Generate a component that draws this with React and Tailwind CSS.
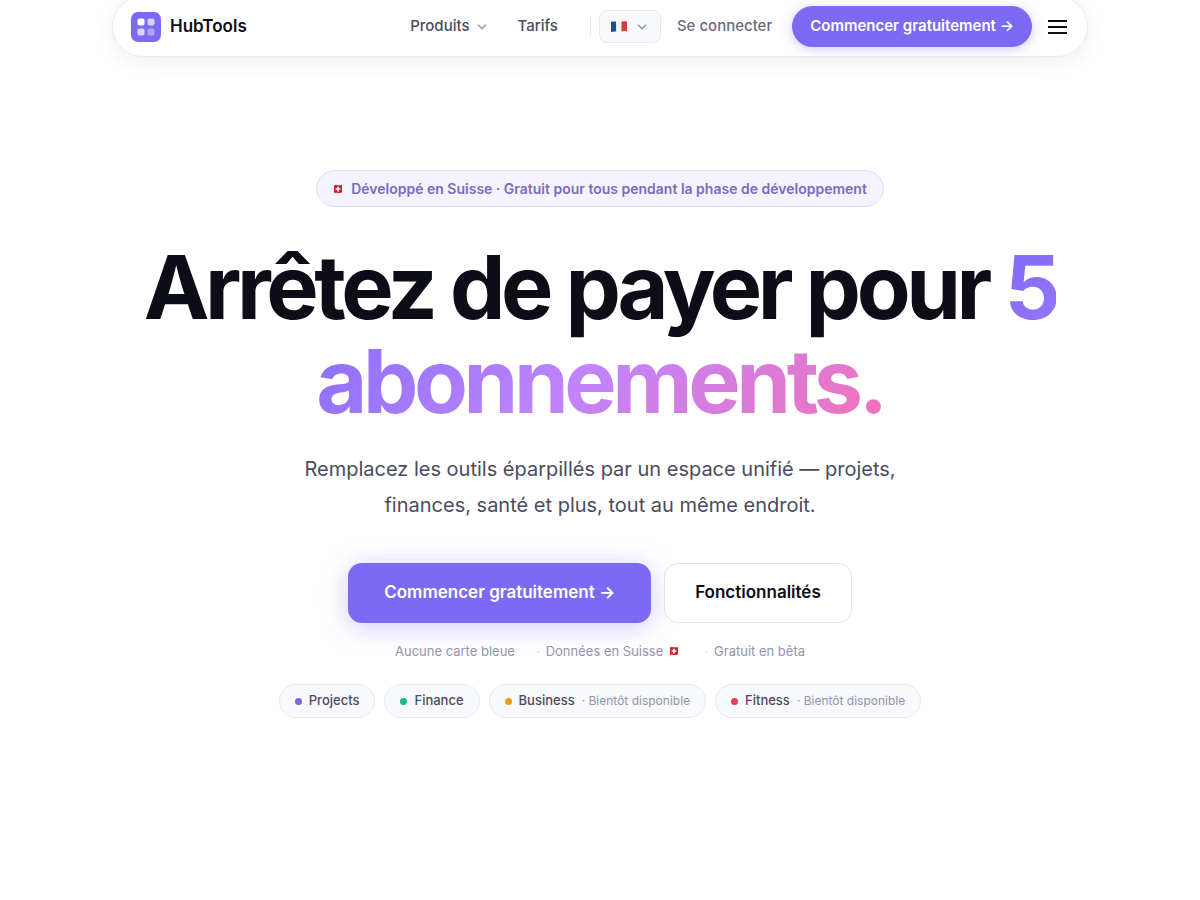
import { ChevronDown } from "lucide-react";

function SwissFlag() {
  return (
    <svg role="img" aria-label="Suisse" width="10" height="10" viewBox="0 0 10 10" className="shrink-0">
      <path d="M1 1.4C3.5 .2 6 2 9 1v7.6C6.500 9.600 4 8 1 9z" fill="#c8232c" />
      <path d="M4.200 2.700h1.600v1.600h1.600v1.500H5.800v1.600H4.200V5.800H2.600V4.300h1.600z" fill="#fff" />
    </svg>
  );
}

function FrenchFlag() {
  return (
    <svg role="img" aria-label="Français" width="16" height="12" viewBox="0 0 16 12">
      <path d="M0 1c2-.7 4-.5 5.300 0v9.700C4 10.300 2 10.300 0 11z" fill="#1b4f94" />
      <path d="M5.300 1c2 .6 3.500.4 5.200-.3v9.900c-1.700.7-3.300.7-5.200.1z" fill="#f4f4f6" />
      <path d="M10.500.7c1.800-.6 3.500-.7 5.500 0v9.900c-2-.7-3.700-.6-5.500 0z" fill="#d33c35" />
    </svg>
  );
}

function Logo() {
  return (
    <svg width="30" height="30" viewBox="0 0 30 30" aria-hidden="true">
      <rect width="30" height="30" rx="7" fill="#7c6af2" />
      <rect x="6.500" y="6.500" width="7" height="7" rx="1.800" fill="#fff" />
      <rect x="16.500" y="6.500" width="7" height="7" rx="1.800" fill="#fff" opacity=".7" />
      <rect x="6.500" y="16.500" width="7" height="7" rx="1.800" fill="#fff" opacity=".7" />
      <rect x="16.500" y="16.500" width="7" height="7" rx="1.800" fill="#fff" opacity=".4" />
    </svg>
  );
}

const products = [
  { name: "Projects", dot: "bg-[#7c66d9]" },
  { name: "Finance", dot: "bg-[#1fb88a]" },
  { name: "Business", dot: "bg-[#e09f1f]", soon: true },
  { name: "Fitness", dot: "bg-[#dd3f5f]", soon: true },
];

function Header() {
  return (
    <header className="mx-auto -mt-1 flex h-[61px] w-full max-w-[976px] items-center rounded-full border border-[#ececf0] bg-white pr-5 pl-[18px] shadow-[0_4px_24px_rgba(0,0,0,0.07)]">
      <a href="#" className="flex items-center gap-[9px] text-[17px] font-semibold text-[#0d0d18]">
        <Logo />
        HubTools
      </a>
      <nav className="ml-auto flex items-center text-[15px] font-medium text-[#4b4b60]">
        <button type="button" className="flex items-center gap-1.5">
          Produits
          <ChevronDown size={14} strokeWidth={3} className="text-[#a3a3ad]" />
        </button>
        <a href="#tarifs" className="ml-7">Tarifs</a>
        <span className="mr-2 ml-8 h-[22px] w-px bg-[#ebebef]" />
        <button type="button" aria-label="Langue" className="flex h-[33px] items-center gap-2 rounded-lg border border-[#e8e9f0] bg-[#f8f9fd] px-[11px]">
          <FrenchFlag />
          <ChevronDown size={14} strokeWidth={3} className="text-[#9a9aa5]" />
        </button>
        <a href="#connexion" className="ml-4 text-[#6b6b7b]">Se connecter</a>
      </nav>
      <a href="#inscription" className="ml-5 flex h-[41px] items-center rounded-full bg-[#7c6af2] px-[18px] text-[15px] font-semibold text-white shadow-[0_2px_12px_rgba(124,106,242,0.35)]">
        Commencer gratuitement →
      </a>
      <button type="button" aria-label="Menu" className="ml-4 flex w-[19px] flex-col gap-1">
        <span className="h-0.5 bg-[#0d0d18]" />
        <span className="h-0.5 bg-[#0d0d18]" />
        <span className="h-0.5 bg-[#0d0d18]" />
      </button>
    </header>
  );
}

export default function App() {
  return (
    <div className="min-h-screen overflow-x-hidden bg-white font-['Inter','Liberation_Sans',sans-serif]">
      <Header />
      <main className="mx-auto flex max-w-[1000px] flex-col items-center pt-[113px] pb-16 text-center">
        <p className="flex h-[37px] items-center gap-2 rounded-full border border-[#e0dcf3] bg-[#f5f3fe] px-4 text-[14px] font-semibold text-[#7a6cc0]">
          <SwissFlag />
          Développé en Suisse · Gratuit pour tous pendant la phase de développement
        </p>
        <h1 className="mt-[33px] text-[88px] leading-[94px] font-bold tracking-tighter text-[#0d0d18]">
          Arrêtez de payer pour{" "}
          <span className="bg-[linear-gradient(135deg,#7c6af7_0%,#c084fc_50%,#f472b6_100%)] bg-clip-text text-transparent">
            5 abonnements.
          </span>
        </h1>
        <p className="mt-[23px] max-w-[620px] text-[20px] leading-9 text-[#4b4b60]">
          Remplacez les outils éparpillés par un espace unifié — projets, finances, santé et plus, tout au même endroit.
        </p>
        <div className="mt-10 flex gap-[13px] text-[17px] font-semibold">
          <a href="#inscription" className="flex h-[60px] items-center rounded-[14px] bg-[#7c6af2] px-9 text-white shadow-[0_4px_28px_rgba(124,106,242,0.35)]">
            Commencer gratuitement →
          </a>
          <a href="#fonctionnalites" className="flex h-[60px] items-center rounded-[14px] border border-[#e2e2e8] bg-white px-[30px] text-[#0d0d18]">
            Fonctionnalités
          </a>
        </div>
        <ul className="mt-[18px] flex gap-[21px] text-[13px] leading-5 text-[#9494a8]">
          <li>Aucune carte bleue</li>
          <li className="flex items-center gap-1.5">
            <span className="text-[#d5d5de]">·</span>
            Données en Suisse
            <span className="pr-1"><SwissFlag /></span>
          </li>
          <li className="flex items-center gap-1.5">
            <span className="text-[#d5d5de]">·</span>
            Gratuit en bêta
          </li>
        </ul>
        <ul className="mt-[23px] flex gap-[9px]">
          {products.map(({ name, dot, soon }) => (
            <li key={name} className="flex h-[34px] items-center gap-[7px] rounded-full border border-[#e8e9f0] bg-[#f8f9fd] px-[15px] text-[13px] font-medium text-[#4b4b60]">
              <span className={`size-[7px] rounded-full ${dot}`} />
              {name}
              {soon && <span className="text-[12px] font-normal text-[#9494a8]">· Bientôt disponible</span>}
            </li>
          ))}
        </ul>
      </main>
    </div>
  );
}
